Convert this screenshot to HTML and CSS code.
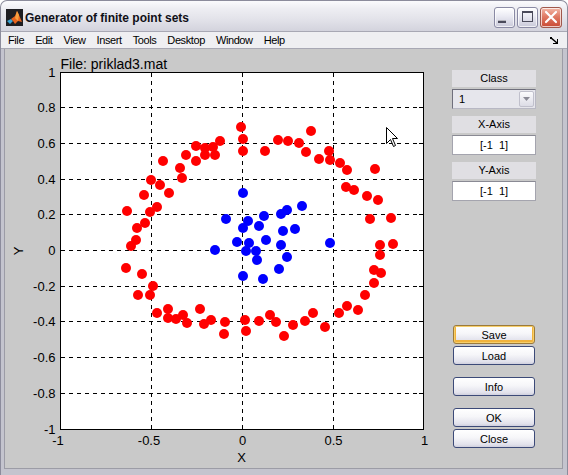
FILE: index.html
```html
<!DOCTYPE html>
<html>
<head>
<meta charset="utf-8">
<title>Generator of finite point sets</title>
<link rel="stylesheet" href="styles.css">
</head>
<body>
<div class="window">
  <div class="titlebar">
    <svg class="app-icon" width="17" height="17" viewBox="0 0 17 17">
      <rect x="0" y="0" width="17" height="17" fill="#1e1e22"/>
      <path d="M1 12 L5 10 L7 12 L4 15 Z" fill="#3aa6d6"/>
      <path d="M5 10 L9 7 L11 2 L13 6 L16 13 L12 12 L9 15 L7 12 Z" fill="#e8641e"/>
      <path d="M11 2 L13 6 L12 12 L9 9 Z" fill="#f6a040"/>
    </svg>
    <span class="title">Generator of finite point sets</span>
    <div class="caption">
      <span class="cap">
        <svg width="21" height="21" viewBox="0 0 21 21"><rect x="4" y="13" width="8" height="3" fill="#4a4a5a"/><rect x="4" y="13" width="8" height="1" fill="#fff" opacity=".6"/></svg>
      </span>
      <span class="cap">
        <svg width="21" height="21" viewBox="0 0 21 21"><rect x="5.5" y="4.5" width="10" height="10" fill="none" stroke="#4a4a5a"/><rect x="5" y="4" width="11" height="2" fill="#4a4a5a"/></svg>
      </span>
      <span class="cap close">
        <svg width="22" height="21" viewBox="0 0 22 21"><path d="M6 5 L16 15 M16 5 L6 15" stroke="#fff" stroke-width="2.2" stroke-linecap="round"/></svg>
      </span>
    </div>
  </div>
  <div class="frame">
    <div class="menubar">
      <span class="menu-item">File</span>
      <span class="menu-item">Edit</span>
      <span class="menu-item">View</span>
      <span class="menu-item">Insert</span>
      <span class="menu-item">Tools</span>
      <span class="menu-item">Desktop</span>
      <span class="menu-item">Window</span>
      <span class="menu-item">Help</span>
      <svg class="dock" width="9" height="7" viewBox="0 0 9 7"><path d="M0 0 L1 0 L7 5 L7 2 L8 2 L8 7 L3 7 L3 6 L6 6 L0 1 Z" fill="#000"/><rect x="0" y="0" width="2" height="2" fill="#000"/></svg>
    </div>
    <div class="figure">
      <svg class="plot" width="436" height="419" viewBox="4 49 436 419">
        <text class="axtitle" x="60.5" y="69">File: priklad3.mat</text>
        <rect x="60.5" y="72.5" width="363" height="357" fill="#fff"/>
        <g class="grid" stroke="#000" stroke-dasharray="4 4" fill="none">
          <path d="M151.5 73 V429 M242.5 73 V429 M333.5 73 V429"/>
          <path d="M61 107.5 H423 M61 143.5 H423 M61 179.5 H423 M61 214.5 H423 M61 250.5 H423 M61 286.5 H423 M61 321.5 H423 M61 357.5 H423 M61 393.5 H423"/>
        </g>
        <g stroke="#000" fill="none">
          <path d="M151.5 429 V425 M242.5 429 V425 M333.5 429 V425 M151.5 73 V77 M242.5 73 V77 M333.5 73 V77"/>
          <path d="M61 107.5 H65 M61 143.5 H65 M61 179.5 H65 M61 214.5 H65 M61 250.5 H65 M61 286.5 H65 M61 321.5 H65 M61 357.5 H65 M61 393.5 H65"/>
          <path d="M423 107.5 H419 M423 143.5 H419 M423 179.5 H419 M423 214.5 H419 M423 250.5 H419 M423 286.5 H419 M423 321.5 H419 M423 357.5 H419 M423 393.5 H419"/>
          <rect x="60.5" y="72.5" width="363" height="357"/>
        </g>
        <g class="ticks-y" text-anchor="end">
          <text x="55.5" y="77">1</text>
          <text x="55.5" y="112">0.8</text>
          <text x="55.5" y="148">0.6</text>
          <text x="55.5" y="184">0.4</text>
          <text x="55.5" y="219">0.2</text>
          <text x="55.5" y="255">0</text>
          <text x="55.5" y="291">-0.2</text>
          <text x="55.5" y="326">-0.4</text>
          <text x="55.5" y="362">-0.6</text>
          <text x="55.5" y="398">-0.8</text>
          <text x="55.5" y="434">-1</text>
        </g>
        <g class="ticks-x" text-anchor="middle">
          <text x="58" y="445">-1</text>
          <text x="149" y="445">-0.5</text>
          <text x="242.5" y="445">0</text>
          <text x="333.5" y="445">0.5</text>
          <text x="424.5" y="445">1</text>
        </g>
        <text class="axlabel" x="241.5" y="462" text-anchor="middle">X</text>
        <text class="axlabel" transform="translate(22.5 251) rotate(-90)" text-anchor="middle">Y</text>
        <g fill="#ff0000">
          <circle cx="241" cy="127" r="5"/><circle cx="243" cy="139" r="5"/><circle cx="243" cy="151" r="5"/>
          <circle cx="265" cy="151" r="5"/><circle cx="278" cy="140" r="5"/><circle cx="288" cy="141" r="5"/>
          <circle cx="311" cy="131" r="5"/><circle cx="299" cy="143" r="5"/><circle cx="306" cy="152" r="5"/>
          <circle cx="319" cy="159" r="5"/><circle cx="329" cy="151" r="5"/><circle cx="330" cy="160" r="5"/>
          <circle cx="340" cy="163" r="5"/><circle cx="347" cy="170" r="5"/><circle cx="354" cy="190" r="5"/>
          <circle cx="346" cy="187" r="5"/><circle cx="375" cy="169" r="5"/><circle cx="367" cy="196" r="5"/>
          <circle cx="370" cy="219" r="5"/><circle cx="378" cy="200" r="5"/><circle cx="391" cy="218" r="5"/>
          <circle cx="380" cy="245" r="5"/><circle cx="393" cy="244" r="5"/><circle cx="380" cy="255" r="5"/>
          <circle cx="381" cy="273" r="5"/><circle cx="374" cy="270" r="5"/><circle cx="374" cy="283" r="5"/>
          <circle cx="365" cy="295" r="5"/><circle cx="358" cy="310" r="5"/><circle cx="347" cy="306" r="5"/>
          <circle cx="339" cy="313" r="5"/><circle cx="325" cy="327" r="5"/><circle cx="313" cy="313" r="5"/>
          <circle cx="305" cy="321" r="5"/><circle cx="293" cy="325" r="5"/><circle cx="284" cy="336" r="5"/>
          <circle cx="276" cy="322" r="5"/><circle cx="270" cy="315" r="5"/><circle cx="259" cy="321" r="5"/>
          <circle cx="245" cy="320" r="5"/><circle cx="246" cy="331" r="5"/><circle cx="225" cy="322" r="5"/>
          <circle cx="224" cy="334" r="5"/><circle cx="211" cy="320" r="5"/><circle cx="204" cy="324" r="5"/>
          <circle cx="200" cy="309" r="5"/><circle cx="187" cy="323" r="5"/><circle cx="183" cy="315" r="5"/>
          <circle cx="176" cy="319" r="5"/><circle cx="168" cy="309" r="5"/><circle cx="168" cy="318" r="5"/>
          <circle cx="157" cy="313" r="5"/><circle cx="150" cy="295" r="5"/><circle cx="153" cy="286" r="5"/>
          <circle cx="138" cy="295" r="5"/><circle cx="142" cy="274" r="5"/><circle cx="126" cy="268" r="5"/>
          <circle cx="131" cy="246" r="5"/><circle cx="136" cy="240" r="5"/><circle cx="127" cy="211" r="5"/>
          <circle cx="137" cy="228" r="5"/><circle cx="145" cy="223" r="5"/><circle cx="150" cy="212" r="5"/>
          <circle cx="157" cy="207" r="5"/><circle cx="144" cy="195" r="5"/><circle cx="151" cy="180" r="5"/>
          <circle cx="160" cy="185" r="5"/><circle cx="169" cy="193" r="5"/><circle cx="163" cy="161" r="5"/>
          <circle cx="180" cy="168" r="5"/><circle cx="182" cy="178" r="5"/><circle cx="186" cy="155" r="5"/>
          <circle cx="196" cy="146" r="5"/><circle cx="196" cy="161" r="5"/><circle cx="205" cy="148" r="5"/>
          <circle cx="205" cy="155" r="5"/><circle cx="213" cy="147" r="5"/><circle cx="215" cy="155" r="5"/>
          <circle cx="220" cy="141" r="5"/>
        </g>
        <g fill="#0000ff">
          <circle cx="243" cy="193" r="5"/><circle cx="226" cy="219" r="5"/><circle cx="248" cy="221" r="5"/>
          <circle cx="243" cy="228" r="5"/><circle cx="259" cy="226" r="5"/><circle cx="264" cy="216" r="5"/>
          <circle cx="281" cy="214" r="5"/><circle cx="287" cy="210" r="5"/><circle cx="302" cy="206" r="5"/>
          <circle cx="283" cy="231" r="5"/><circle cx="295" cy="229" r="5"/><circle cx="237" cy="242" r="5"/>
          <circle cx="249" cy="243" r="5"/><circle cx="246" cy="251" r="5"/><circle cx="256" cy="251" r="5"/>
          <circle cx="266" cy="240" r="5"/><circle cx="281" cy="245" r="5"/><circle cx="215" cy="250" r="5"/>
          <circle cx="257" cy="260" r="5"/><circle cx="287" cy="257" r="5"/><circle cx="279" cy="269" r="5"/>
          <circle cx="243" cy="276" r="5"/><circle cx="263" cy="279" r="5"/><circle cx="330" cy="243" r="5"/>
        </g>
        <path d="M386.5 127.5 V143.5 L390.5 139.5 L393.5 146.5 L395.5 145.5 L392.5 138.5 L397.5 138.5 Z" fill="#fff" stroke="#000" stroke-linejoin="miter"/>
      </svg>
      <div class="controls">
        <div class="label">Class</div>
        <div class="popup"><span class="popup-value">1</span><span class="popup-btn"><svg width="7" height="4" viewBox="0 0 7 4"><path d="M0 0 H7 L3.5 4 Z" fill="#8a8a96"/></svg></span></div>
        <div class="label spaced">X-Axis</div>
        <div class="edit">[-1  1]</div>
        <div class="label spaced">Y-Axis</div>
        <div class="edit">[-1  1]</div>
        <div class="buttons">
          <button class="btn default">Save</button>
          <button class="btn">Load</button>
          <button class="btn group">Info</button>
          <button class="btn group">OK</button>
          <button class="btn">Close</button>
        </div>
      </div>
    </div>
  </div>
</div>
</body>
</html>
```

FILE: styles.css
```css
* { box-sizing: border-box; }
html, body { margin: 0; padding: 0; }
body {
  width: 568px;
  height: 475px;
  overflow: hidden;
  background: #ffffff;
  font-family: "Liberation Sans", Arial, sans-serif;
}
.window {
  width: 568px;
  height: 475px;
  display: flex;
  flex-direction: column;
}
.titlebar {
  height: 31px;
  flex: none;
  display: flex;
  align-items: center;
  padding: 3px 5px 0 5px;
  background: linear-gradient(#fbfbfd 0%, #eeeef3 25%, #e3e3ea 60%, #d3d3dd 100%);
  border: 1px solid #8c8c9c;
  border-bottom: none;
  border-radius: 7px 7px 0 0;
}
.app-icon { flex: none; margin-right: 2px; }
.title {
  flex: 1;
  font-weight: bold;
  font-size: 12px;
  color: #101018;
  padding-top: 1px;
}
.caption { display: flex; gap: 2px; align-items: center; }
.cap {
  width: 21px;
  height: 21px;
  display: block;
  border: 1px solid #8a8aa4;
  border-radius: 3px;
  background: linear-gradient(#ffffff 0%, #ececf4 40%, #c9c9d9 100%);
  box-shadow: inset 0 0 0 1px rgba(255,255,255,0.7);
  overflow: hidden;
}
.cap svg { display: block; margin: -1px; }
.cap.close {
  width: 22px;
  border-color: #a0584c;
  background: linear-gradient(#f3b8a8 0%, #e07a64 45%, #c94a34 100%);
}
.frame {
  flex: 1;
  display: flex;
  flex-direction: column;
  background: #c4c4ce;
  border-left: 1px solid #8c8c9c;
  border-right: 1px solid #8c8c9c;
  border-bottom: 1px solid #8c8c9c;
  padding: 0 4px 6px 3px;
}
.menubar {
  height: 18px;
  flex: none;
  display: flex;
  align-items: center;
  gap: 11px;
  background: #efeff2;
  border-top: 1px solid #a8a8b4;
  border-bottom: 1px solid #a8a8b4;
  font-size: 11px;
  letter-spacing: -0.4px;
  color: #000;
  margin: 0 -4px 0 -3px;
  padding-left: 7px;
  padding-right: 8px;
}
.dock { margin-left: auto; }
.figure {
  flex: 1;
  display: flex;
  background: #c9c9c9;
  border-left: 1px solid #9c9ca6;
  border-bottom: 1px solid #9c9ca6;
  border-right: 1px solid #9c9ca6;
}
.plot { display: block; flex: none; margin-left: -1px; }
.plot text {
  font-family: "Liberation Sans", Arial, sans-serif;
  font-size: 13px;
  fill: #000;
}
.plot .axtitle { font-size: 14px; }
.controls {
  width: 84px;
  margin-left: 12px;
  padding-top: 21px;
  display: flex;
  flex-direction: column;
  font-size: 11px;
}
.label {
  height: 17px;
  background: #e0dfe3;
  text-align: center;
  padding-top: 2px;
  line-height: 13px;
}
.label.spaced { margin-top: 7px; }
.popup {
  margin-top: 2px;
  height: 20px;
  display: flex;
  align-items: center;
  background: #e6e6ec;
  border: 1px solid #6f6f7c;
  border-right-color: #b8b8c4;
  border-bottom-color: #b8b8c4;
}
.popup-value { flex: 1; padding-left: 6px; }
.popup-btn {
  width: 15px;
  height: 16px;
  margin-right: 1px;
  display: flex;
  align-items: center;
  justify-content: center;
  background: linear-gradient(#fbfbfd, #dcdce6);
  border: 1px solid #c0c0cc;
  border-radius: 2px;
}
.edit {
  margin-top: 2px;
  height: 20px;
  background: #ffffff;
  border: 1px solid #a4a4ae;
  border-top-color: #8a8a94;
  text-align: center;
  line-height: 18px;
  white-space: pre;
}
.buttons {
  margin-top: 124px;
  display: flex;
  flex-direction: column;
  gap: 2px;
  padding-left: 1px;
}
.btn {
  width: 82px;
  height: 19px;
  padding: 0;
  font-family: "Liberation Sans", Arial, sans-serif;
  font-size: 11px;
  color: #000;
  border: 1px solid #3c4a78;
  border-radius: 3px;
  background: linear-gradient(#ffffff 0%, #f6f6f9 45%, #e2e2ec 85%, #d0d0de 100%);
}
.btn.default {
  border-color: #9c7a3a;
  box-shadow: inset 0 0 0 1px #f7cf6a, inset 0 -1px 0 2px #f0b23c;
}
.btn.group { margin-top: 10px; }
```
